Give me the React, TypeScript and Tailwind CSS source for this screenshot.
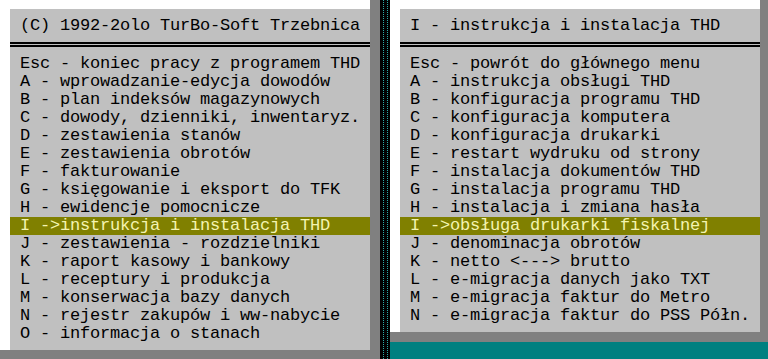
const leftTitle = "(C) 1992-2olo TurBo-Soft Trzebnica";
const rightTitle = "I - instrukcja i instalacja THD";

const leftItems = [
  "Esc - koniec pracy z programem THD",
  "A - wprowadzanie-edycja dowodów",
  "B - plan indeksów magazynowych",
  "C - dowody, dzienniki, inwentaryz.",
  "D - zestawienia stanów",
  "E - zestawienia obrotów",
  "F - fakturowanie",
  "G - księgowanie i eksport do TFK",
  "H - ewidencje pomocnicze",
  "I ->instrukcja i instalacja THD",
  "J - zestawienia - rozdzielniki",
  "K - raport kasowy i bankowy",
  "L - receptury i produkcja",
  "M - konserwacja bazy danych",
  "N - rejestr zakupów i ww-nabycie",
  "O - informacja o stanach",
];

const rightItems = [
  "Esc - powrót do głównego menu",
  "A - instrukcja obsługi THD",
  "B - konfiguracja programu THD",
  "C - konfiguracja komputera",
  "D - konfiguracja drukarki",
  "E - restart wydruku od strony",
  "F - instalacja dokumentów THD",
  "G - instalacja programu THD",
  "H - instalacja i zmiana hasła",
  "I ->obsługa drukarki fiskalnej",
  "J - denominacja obrotów",
  "K - netto <---> brutto",
  "L - e-migracja danych jako TXT",
  "M - e-migracja faktur do Metro",
  "N - e-migracja faktur do PSS Półn.",
];

type MenuPanelProps = {
  title: string;
  items: string[];
  active: number;
};

function MenuPanel({ title, items, active }: MenuPanelProps) {
  return (
    <div className="h-full bg-[#c0c0c0] pt-2 text-black">
      <div className="h-[18px] whitespace-pre pl-[10px] leading-[18px]">{title}</div>
      <div className="mt-[7px] h-[2px] bg-black" />
      <div className="mt-px h-[2px] bg-black" />
      <ul className="mt-2">
        {items.map((item, i) => (
          <li
            key={item}
            className={
              i === active
                ? "h-[18px] whitespace-pre bg-[#808000] pl-[10px] leading-[18px] text-[#f4f4b0]"
                : "h-[18px] whitespace-pre pl-[10px] leading-[18px]"
            }
          >
            {item}
          </li>
        ))}
      </ul>
    </div>
  );
}

export default function App() {
  return (
    <div className="flex h-[359px] w-[768px] overflow-hidden bg-black font-['Liberation_Mono',monospace] text-[17px] tracking-[-0.2px]">
      {/* lewe okno z cieniem */}
      <div className="h-full w-[380px] bg-[#808080]">
        <div className="h-[350px] w-[370px] bg-white pl-[10px] pt-[9px]">
          <MenuPanel title={leftTitle} items={leftItems} active={9} />
        </div>
      </div>

      {/* tło pulpitu */}
      <div className="flex h-full w-[10px] justify-center bg-black">
        <div className="h-full w-[5px] border-x border-dotted border-[#2aa8a8]" />
      </div>

      {/* prawe okno */}
      <div className="flex h-full w-[378px] flex-col">
        <div className="h-[342px] bg-[#808080]">
          <div className="h-[332px] w-[370px] bg-white pl-[10px] pt-[9px]">
            <MenuPanel title={rightTitle} items={rightItems} active={9} />
          </div>
        </div>
        <div className="flex-1 bg-[#008080]" />
      </div>
    </div>
  );
}
